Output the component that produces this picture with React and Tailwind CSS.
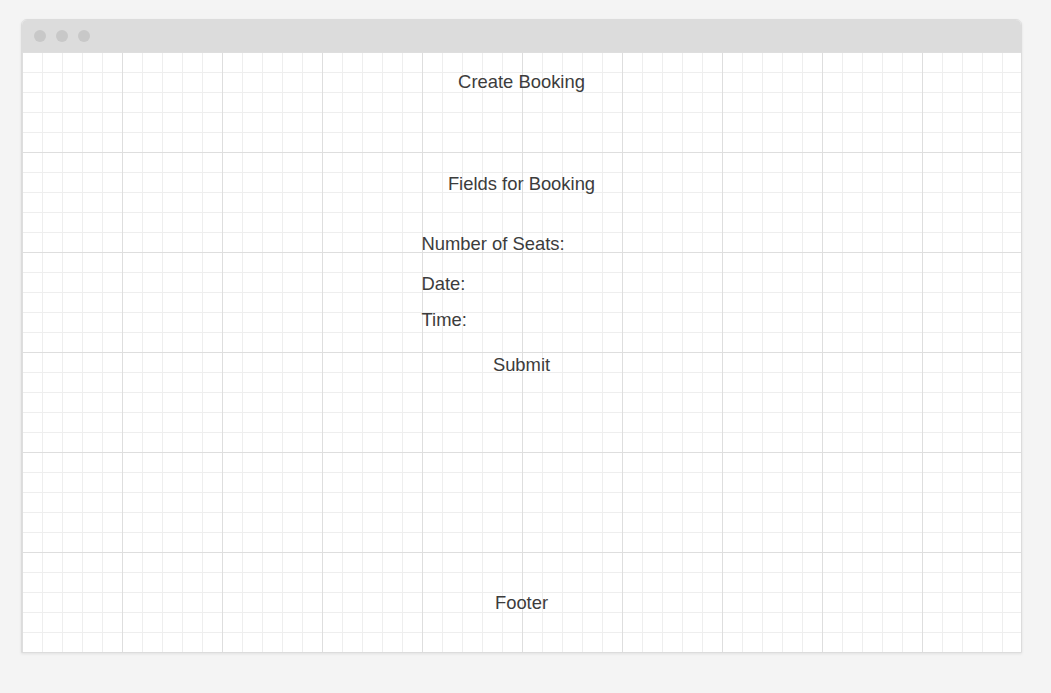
export default function App() {
  return (
    <div className="min-h-[693px] w-full bg-[#f4f4f4] pt-[19px] pl-[21px] font-['Liberation_Sans',Arial,sans-serif] text-[#3c3c3c]">
      <div className="w-[1001px] rounded-t-[6px] border border-[#dcdcdc] bg-white shadow-[0_1px_3px_rgba(0,0,0,0.08)]">
        <div className="flex h-[32px] items-center gap-[10px] rounded-t-[5px] bg-[#dcdcdc] pl-[12px]">
          <span className="h-[12px] w-[12px] rounded-full bg-[#c8c8c8]" />
          <span className="h-[12px] w-[12px] rounded-full bg-[#c8c8c8]" />
          <span className="h-[12px] w-[12px] rounded-full bg-[#c8c8c8]" />
        </div>
        <div className="flex h-[600px] flex-col bg-white bg-[linear-gradient(to_right,#dedede_1px,transparent_1px),linear-gradient(to_bottom,#dedede_1px,transparent_1px),linear-gradient(to_right,#eeeeee_1px,transparent_1px),linear-gradient(to_bottom,#eeeeee_1px,transparent_1px)] bg-[size:100px_100px,100px_100px,20px_20px,20px_20px]">
          <header className="flex h-[60px] items-center justify-center text-[18.4px] leading-[20px]">
            Create Booking
          </header>
          <main className="flex flex-1 flex-col items-center text-[18.4px] leading-[20px]">
            <h2 className="mt-[62px]">Fields for Booking</h2>
            <div className="mt-[40px] flex w-[200px] flex-col">
              <label>Number of Seats:</label>
              <label className="mt-[20px]">Date:</label>
              <label className="mt-[16px]">Time:</label>
            </div>
            <button className="mt-[25px] leading-[20px]">Submit</button>
          </main>
          <footer className="flex h-[100px] items-center justify-center pt-[2px] text-[18.4px] leading-[20px]">
            Footer
          </footer>
        </div>
      </div>
    </div>
  );
}
